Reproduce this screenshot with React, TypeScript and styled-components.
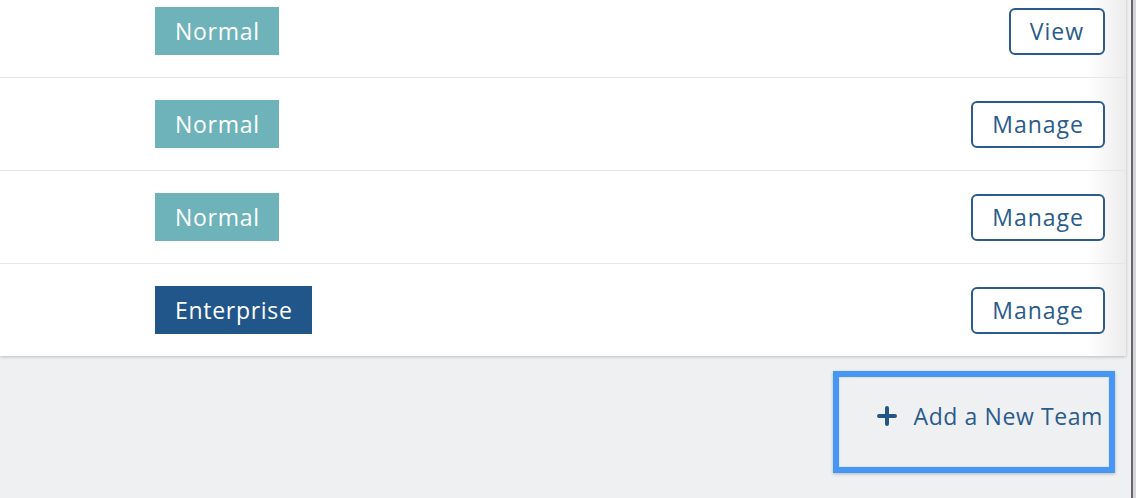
import styled, { createGlobalStyle } from "styled-components"

const GlobalStyle = createGlobalStyle`
    html, body {
        margin: 0;
        padding: 0;
        background: #eff0f2;
        font-family: "Open Sans", "Noto Sans", sans-serif;
        overflow: hidden;
    }
`

const Page = styled.div`
    display: flex;
    height: 498px;
    overflow: hidden;
`

const Main = styled.div`
    flex: 1;
    display: flex;
    flex-direction: column;
    background: #eff0f2;
`

const Gutter = styled.div`
    width: 5px;
    background: #d6d6d8;
    border-left: 2px solid #66666b;
    box-sizing: border-box;
`

const Card = styled.div`
    margin: -15px 5px 0 0;
    background: linear-gradient(to right, #ffffff 96.5%, #ececec 100%);
    box-shadow: 0 1px 3px rgba(0, 0, 0, 0.22);
`

const Row = styled.div`
    display: flex;
    align-items: center;
    justify-content: space-between;
    height: 92px;
    padding: 0 21px 0 155px;
    border-bottom: 1px solid #e7e7e7;

    &:last-child {
        border-bottom: none;
    }
`

const Badge = styled.span<{ $tier: "normal" | "enterprise" }>`
    display: inline-flex;
    align-items: center;
    height: 48px;
    padding: 0 19px 0 20px;
    font-size: 23px;
    letter-spacing: 0.7px;
    color: #fff;
    background: ${p => p.$tier === "enterprise" ? "#20568a" : "#6eb3b9"};
`

const RowButton = styled.button`
    height: 47px;
    padding: 0 19px;
    border: 2px solid #2a5b8c;
    border-radius: 6px;
    background: #fff;
    color: #2a5b8c;
    font-family: inherit;
    font-size: 23px;
    letter-spacing: 1px;
`

const Footer = styled.div`
    display: flex;
    justify-content: flex-end;
    padding: 15px 16px 0 0;
`

const Highlight = styled.div`
    width: 282px;
    height: 102px;
    box-sizing: border-box;
    border: 6px solid #4696f4;
    box-shadow: 0 1px 3px rgba(0, 0, 0, 0.25), inset 0 0 2px rgba(0, 0, 0, 0.2);
    display: flex;
    justify-content: flex-end;
    align-items: flex-start;
    padding: 23px 6px 0 0;
`

const AddButton = styled.button`
    display: flex;
    align-items: center;
    gap: 16px;
    border: none;
    background: none;
    padding: 0;
    color: #2a5b8c;
    font-family: inherit;
    font-size: 23px;
    letter-spacing: 0.6px;
`

const teams = [
    { tier: "normal" as const, label: "Normal", action: "View" },
    { tier: "normal" as const, label: "Normal", action: "Manage" },
    { tier: "normal" as const, label: "Normal", action: "Manage" },
    { tier: "enterprise" as const, label: "Enterprise", action: "Manage" },
]

const PlusIcon = () => (
    <svg width="20" height="20" viewBox="0 0 20 20">
        <path d="M10 2v16M2 10h16" stroke="#255486" strokeWidth="4" strokeLinecap="round" />
    </svg>
)

const App = () => {
    return (
        <Page>
            <GlobalStyle />
            <Main>
                <Card>
                    {teams.map((t, i) => (
                        <Row key={i}>
                            <Badge $tier={t.tier}>{t.label}</Badge>
                            <RowButton>{t.action}</RowButton>
                        </Row>
                    ))}
                </Card>
                <Footer>
                    <Highlight>
                        <AddButton><PlusIcon />Add a New Team</AddButton>
                    </Highlight>
                </Footer>
            </Main>
            <Gutter />
        </Page>
    )
}

export default App
